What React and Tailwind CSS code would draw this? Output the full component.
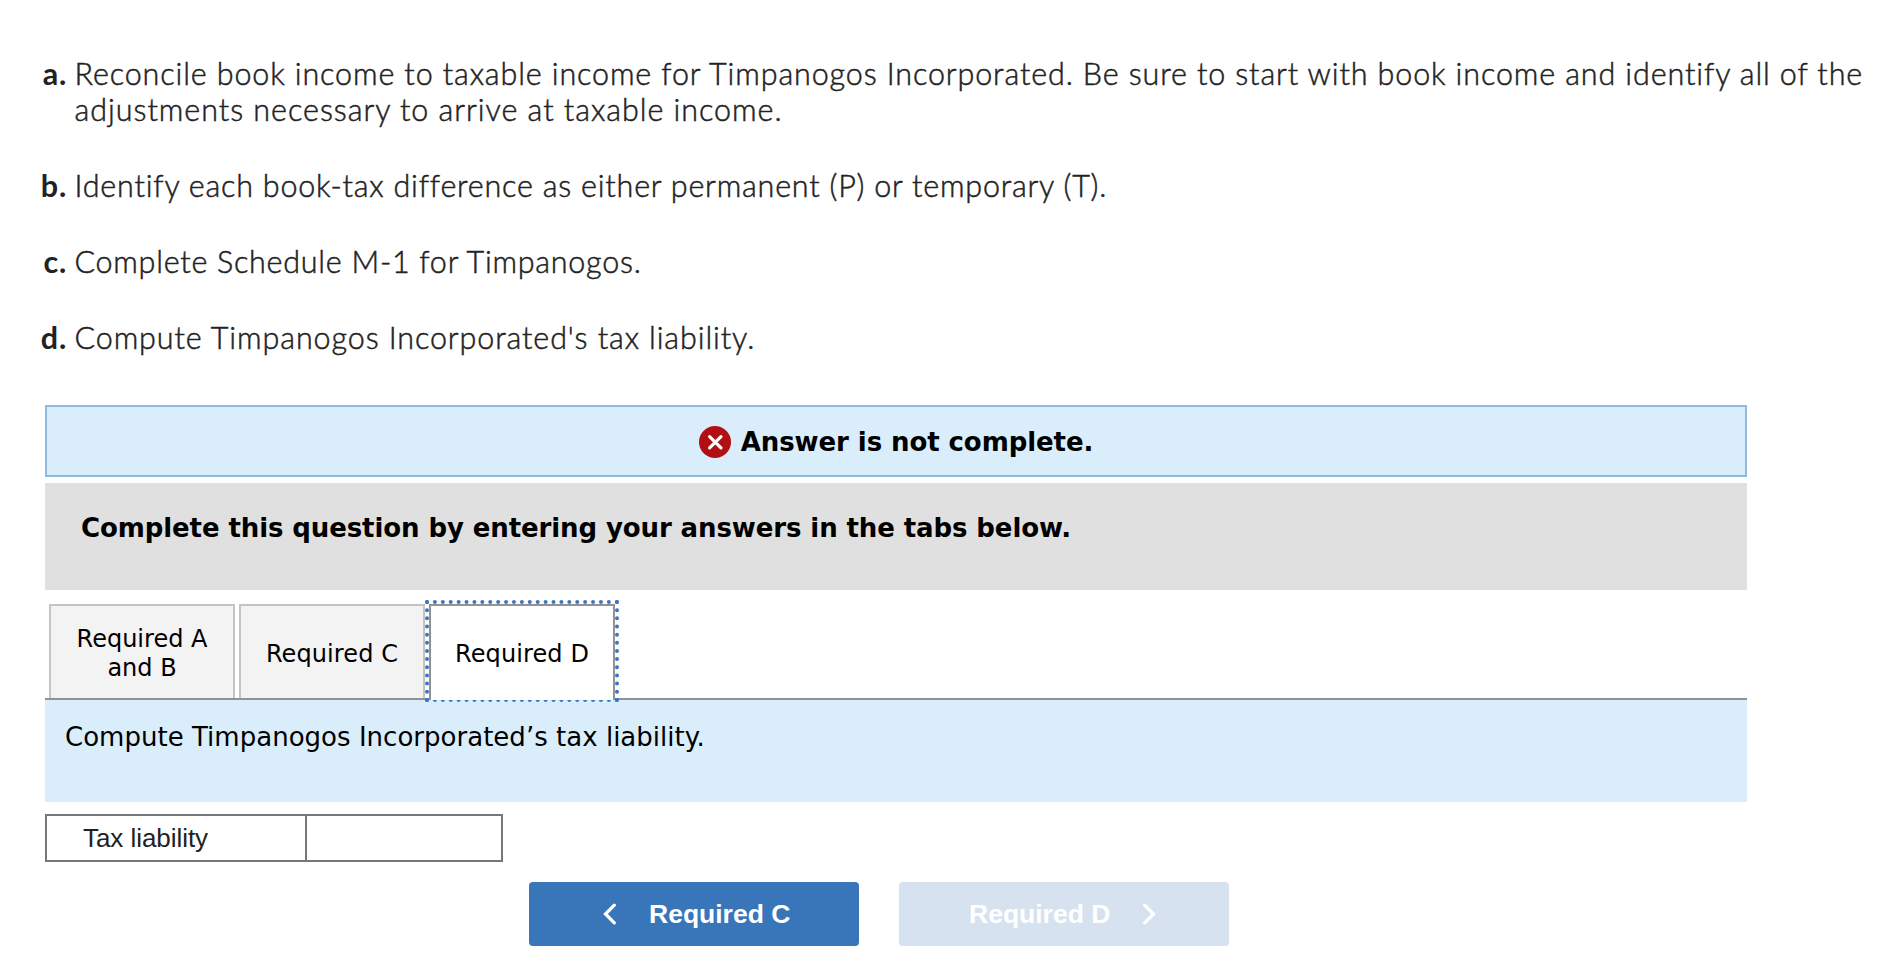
const INSTRUCTIONS = [
  {
    label: "a.",
    lines: [
      {
        text: "Reconcile book income to taxable income for Timpanogos Incorporated. Be sure to start with book income and identify all of the",
        spacing: "tracking-[0.88px]",
      },
      { text: "adjustments necessary to arrive at taxable income.", spacing: "tracking-[0.967px]" },
    ],
  },
  {
    label: "b.",
    lines: [
      {
        text: "Identify each book-tax difference as either permanent (P) or temporary (T).",
        spacing: "tracking-[0.787px]",
      },
    ],
  },
  { label: "c.", lines: [{ text: "Complete Schedule M-1 for Timpanogos.", spacing: "tracking-[0.74px]" }] },
  {
    label: "d.",
    lines: [{ text: "Compute Timpanogos Incorporated's tax liability.", spacing: "tracking-[0.9px]" }],
  },
];

function Instructions() {
  return (
    <ol className="flex flex-col gap-10 pt-[55px] font-['Lato',sans-serif] text-[30.5px] leading-9 text-[#222222]">
      {INSTRUCTIONS.map(({ label, lines }) => (
        <li key={label} className="flex">
          <span className="w-[67px] shrink-0 text-right font-bold tracking-[0.8px]">{label}</span>
          <div className="pl-[7.5px] font-light [-webkit-text-stroke:0.5px_#222222]">
            {lines.map(({ text, spacing }) => (
              <p key={text} className={`whitespace-nowrap ${spacing}`}>
                {text}
              </p>
            ))}
          </div>
        </li>
      ))}
    </ol>
  );
}

function ErrorIcon() {
  return (
    <svg className="size-8 shrink-0" viewBox="0 0 32 32" fill="none" aria-hidden="true">
      <circle cx="16" cy="16" r="16" fill="#b01013" />
      <path d="M10.6 10.6 22 21.8M22 10.6 10.6 21.8" stroke="#fff" strokeWidth="3.2" strokeLinecap="round" />
    </svg>
  );
}

function Chevron({ direction }) {
  return (
    <svg className="h-[22px] w-[14px] shrink-0" viewBox="0 0 14 22" fill="none" aria-hidden="true">
      <path
        d={direction === "left" ? "M11.3 2.2 2.5 11 11.3 19.8" : "M2.7 2.2 11.5 11 2.7 19.8"}
        stroke="#fff"
        strokeWidth="3.3"
        strokeLinecap="round"
      />
    </svg>
  );
}

function Tab({ children }) {
  return (
    <button className="flex h-[94px] w-[186px] items-center justify-center border-2 border-b-0 border-[#c4c4c4] bg-[#f3f3f3] pt-1 text-center">
      {children}
    </button>
  );
}

function ActiveTab({ children }) {
  return (
    <button className="h-[94px] w-[186px] outline-4 outline-dotted outline-[#3b78c0]">
      <span className="relative z-10 flex h-24 items-center justify-center border-2 border-b-0 border-[#929292] bg-white pt-[2px] text-center">
        {children}
      </span>
    </button>
  );
}

export default function App() {
  return (
    <main className="min-h-[977px] bg-white">
      <Instructions />

      <section className="ml-[45px] mt-[50px] w-[1702px] font-['DejaVu_Sans',sans-serif] text-black">
        <div className="flex h-[72px] items-center justify-center gap-[10px] border-2 border-[#8fb9e0] bg-[#daedfb] pt-[2px] text-[26px] font-bold leading-[30px]">
          <ErrorIcon />
          <span className="tracking-[-0.08px]">Answer is not complete.</span>
        </div>

        <div className="mt-[6px] h-[107px] bg-[#e0e0e0] pl-[36px] pt-[30px] text-[26px] font-bold leading-[30px] tracking-[-0.1px]">
          Complete this question by entering your answers in the tabs below.
        </div>

        <div className="relative z-10 mt-[14px] flex gap-1 pl-1 text-[24px] leading-[29px]">
          <Tab>
            <span>
              Required A
              <br />
              and B
            </span>
          </Tab>
          <Tab>
            <span className="tracking-[0.1px]">Required C</span>
          </Tab>
          <ActiveTab>
            <span className="tracking-[0.1px]">Required D</span>
          </ActiveTab>
        </div>

        <div className="h-[104px] border-t-2 border-[#929292] bg-[#daedfb] pl-5 pt-[22px] text-[26px] leading-[30px] tracking-[0.02px]">
          Compute Timpanogos Incorporated’s tax liability.
        </div>

        <div className="mt-3 flex h-12 w-[458px] border-2 border-[#777777] font-['Liberation_Sans',sans-serif] text-[26px] leading-[30px] text-[#222222]">
          <div className="flex w-[260px] items-center border-r-2 border-[#777777] pl-[36px] tracking-[-0.05px]">
            Tax liability
          </div>
          <div className="flex-1" />
        </div>

        <div className="mt-5 flex gap-10 pl-[484px] font-['Liberation_Sans',sans-serif] text-[26.5px] font-bold leading-[30px] text-white">
          <button className="flex h-16 w-[330px] items-center gap-[32px] rounded bg-[#3875b9] pl-[74px]">
            <Chevron direction="left" />
            <span>Required C</span>
          </button>
          <button className="flex h-16 w-[330px] items-center gap-[32px] rounded bg-[#d7e2f0] pl-[70px]" disabled>
            <span>Required D</span>
            <Chevron direction="right" />
          </button>
        </div>
      </section>
    </main>
  );
}
